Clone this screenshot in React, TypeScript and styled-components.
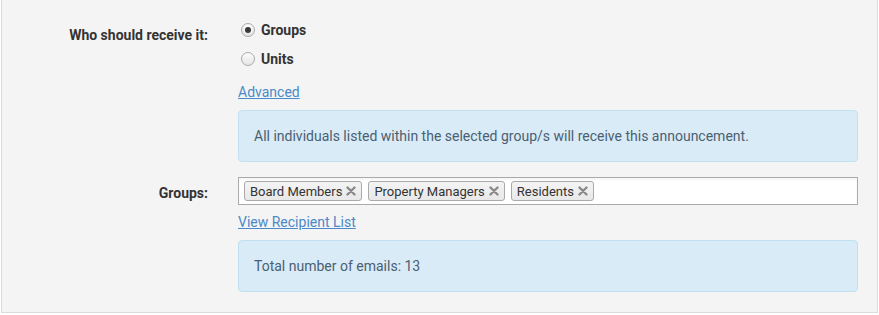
import { createGlobalStyle } from 'styled-components';
import styled from 'styled-components';

const GlobalStyle = createGlobalStyle`
	html, body {
		margin: 0;
		padding: 0;
		background: #ffffff;
	}
	body {
		font-family: Roboto, "Liberation Sans", Arial, sans-serif;
		font-size: 14px;
		color: #333333;
	}
`;

const Panel = styled.section`
	box-sizing: border-box;
	width: 877px;
	margin-left: 1px;
	padding: 19px 18px 20px 0;
	background: #f4f4f4;
	border: 1px solid #dcdcdc;
	border-top: none;
	display: flex;
	flex-direction: column;
	gap: 15px;
`;

const Row = styled.div`
	display: grid;
	grid-template-columns: 206px 620px;
	column-gap: 30px;
	align-items: start;
`;

const Label = styled.label`
	text-align: right;
	font-weight: 700;
	line-height: 20px;
	padding-top: 6px;
	color: #333333;
`;

const Field = styled.div`
	display: flex;
	flex-direction: column;
	align-items: flex-start;
`;

const RadioList = styled.div`
	display: flex;
	flex-direction: column;
	gap: 8px;
`;

const RadioOption = styled.label`
	display: flex;
	align-items: center;
	gap: 6px;
	height: 21px;
	padding-left: 3px;
	font-weight: 700;
	color: #333333;
`;

const RadioDot = styled.span<{ $checked?: boolean }>`
	box-sizing: border-box;
	width: 14px;
	height: 14px;
	border-radius: 50%;
	border: 1px solid #a9a9a9;
	background: linear-gradient(#fdfdfd, #e4e4e4);
	display: flex;
	align-items: center;
	justify-content: center;
	&::after {
		content: '';
		display: ${(p) => (p.$checked ? 'block' : 'none')};
		width: 6px;
		height: 6px;
		border-radius: 50%;
		background: #3a3a3a;
	}
`;

const TextLink = styled.a<{ $top?: number }>`
	color: #4a89c8;
	text-decoration: underline;
	line-height: 20px;
	margin-top: ${(p) => p.$top ?? 0}px;
	cursor: pointer;
`;

const InfoBox = styled.div`
	box-sizing: border-box;
	width: 100%;
	margin-top: 8px;
	padding: 15px;
	line-height: 20px;
	background: #d9ebf7;
	border: 1px solid #bfe1ef;
	border-radius: 4px;
	color: #4a5f72;
`;

const TagInput = styled.div`
	box-sizing: border-box;
	width: 100%;
	height: 28px;
	padding: 3px 5px;
	background: #ffffff;
	border: 1px solid #aaaaaa;
	box-shadow: inset 0 2px 2px rgba(0, 0, 0, 0.04);
	display: flex;
	align-items: center;
	gap: 6px;
`;

const Tag = styled.span`
	box-sizing: border-box;
	height: 20px;
	padding: 0 5px;
	display: flex;
	align-items: center;
	gap: 4px;
	font-size: 13px;
	color: #333333;
	background: linear-gradient(#f4f4f4, #e8e8e8);
	border: 1px solid #aaaaaa;
	border-radius: 3px;
`;

const RemoveIcon = () => (
	<svg width="10" height="10" viewBox="0 0 10 10">
		<path
			d="M1.5 1.5 L8.5 8.5 M8.5 1.5 L1.5 8.5"
			stroke="#8a8a8a"
			strokeWidth="2.4"
			strokeLinecap="round"
		/>
	</svg>
);

const groups = ['Board Members', 'Property Managers', 'Residents'];

export default function App() {
	return (
		<>
			<GlobalStyle />
			<Panel>
				<Row>
					<Label>Who should receive it:</Label>
					<Field>
						<RadioList>
							<RadioOption>
								<RadioDot $checked />
								Groups
							</RadioOption>
							<RadioOption>
								<RadioDot />
								Units
							</RadioOption>
						</RadioList>
						<TextLink $top={13}>Advanced</TextLink>
						<InfoBox>
							All individuals listed within the selected group/s will receive
							this announcement.
						</InfoBox>
					</Field>
				</Row>
				<Row>
					<Label>Groups:</Label>
					<Field>
						<TagInput>
							{groups.map((g) => (
								<Tag key={g}>
									{g}
									<RemoveIcon />
								</Tag>
							))}
						</TagInput>
						<TextLink $top={7}>View Recipient List</TextLink>
						<InfoBox>Total number of emails: 13</InfoBox>
					</Field>
				</Row>
			</Panel>
		</>
	);
}
